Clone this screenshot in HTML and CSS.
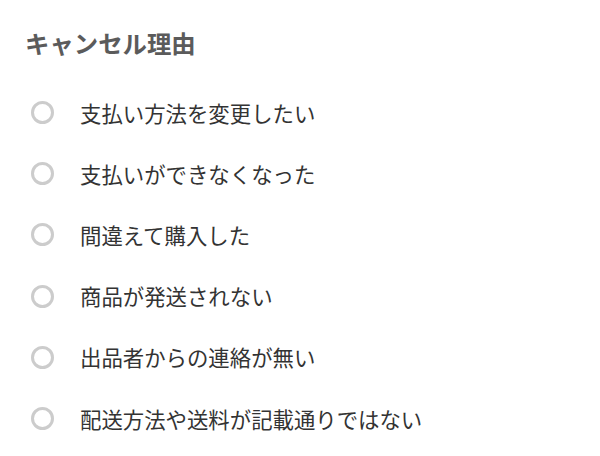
FILE: index.html
```html
<!DOCTYPE html>
<html lang="ja">
<head>
<meta charset="utf-8">
<link rel="stylesheet" href="styles.css">
</head>
<body>
<div class="page">
  <h1 class="title">キャンセル理由</h1>
  <ul class="reasons">
    <li class="reason"><span class="radio"></span><span class="label">支払い方法を変更したい</span></li>
    <li class="reason"><span class="radio"></span><span class="label">支払いができなくなった</span></li>
    <li class="reason"><span class="radio"></span><span class="label">間違えて購入した</span></li>
    <li class="reason"><span class="radio"></span><span class="label">商品が発送されない</span></li>
    <li class="reason"><span class="radio"></span><span class="label">出品者からの連絡が無い</span></li>
    <li class="reason"><span class="radio"></span><span class="label">配送方法や送料が記載通りではない</span></li>
  </ul>
</div>
</body>
</html>
```

FILE: styles.css
```css
html, body {
  margin: 0;
  padding: 0;
  background: #ffffff;
}
.page {
  width: 600px;
  height: 456px;
  box-sizing: border-box;
  padding: 30px 0 0 25px;
  font-family: "Noto Sans CJK JP", "Noto Sans", sans-serif;
  overflow: hidden;
}
.title {
  margin: 0;
  font-size: 24.4px;
  line-height: 25px;
  font-weight: 700;
  color: #5b5b5b;
}
.reasons {
  list-style: none;
  margin: 27px 0 0 0;
  padding: 0;
}
.reason {
  display: flex;
  align-items: center;
  height: 61.2px;
}
.radio {
  box-sizing: border-box;
  width: 23px;
  height: 23px;
  margin-left: 6px;
  border: 3px solid #cccccc;
  border-radius: 50%;
  flex: none;
}
.label {
  margin-left: 26px;
  font-size: 21.4px;
  line-height: 24px;
  color: #333333;
}
```
